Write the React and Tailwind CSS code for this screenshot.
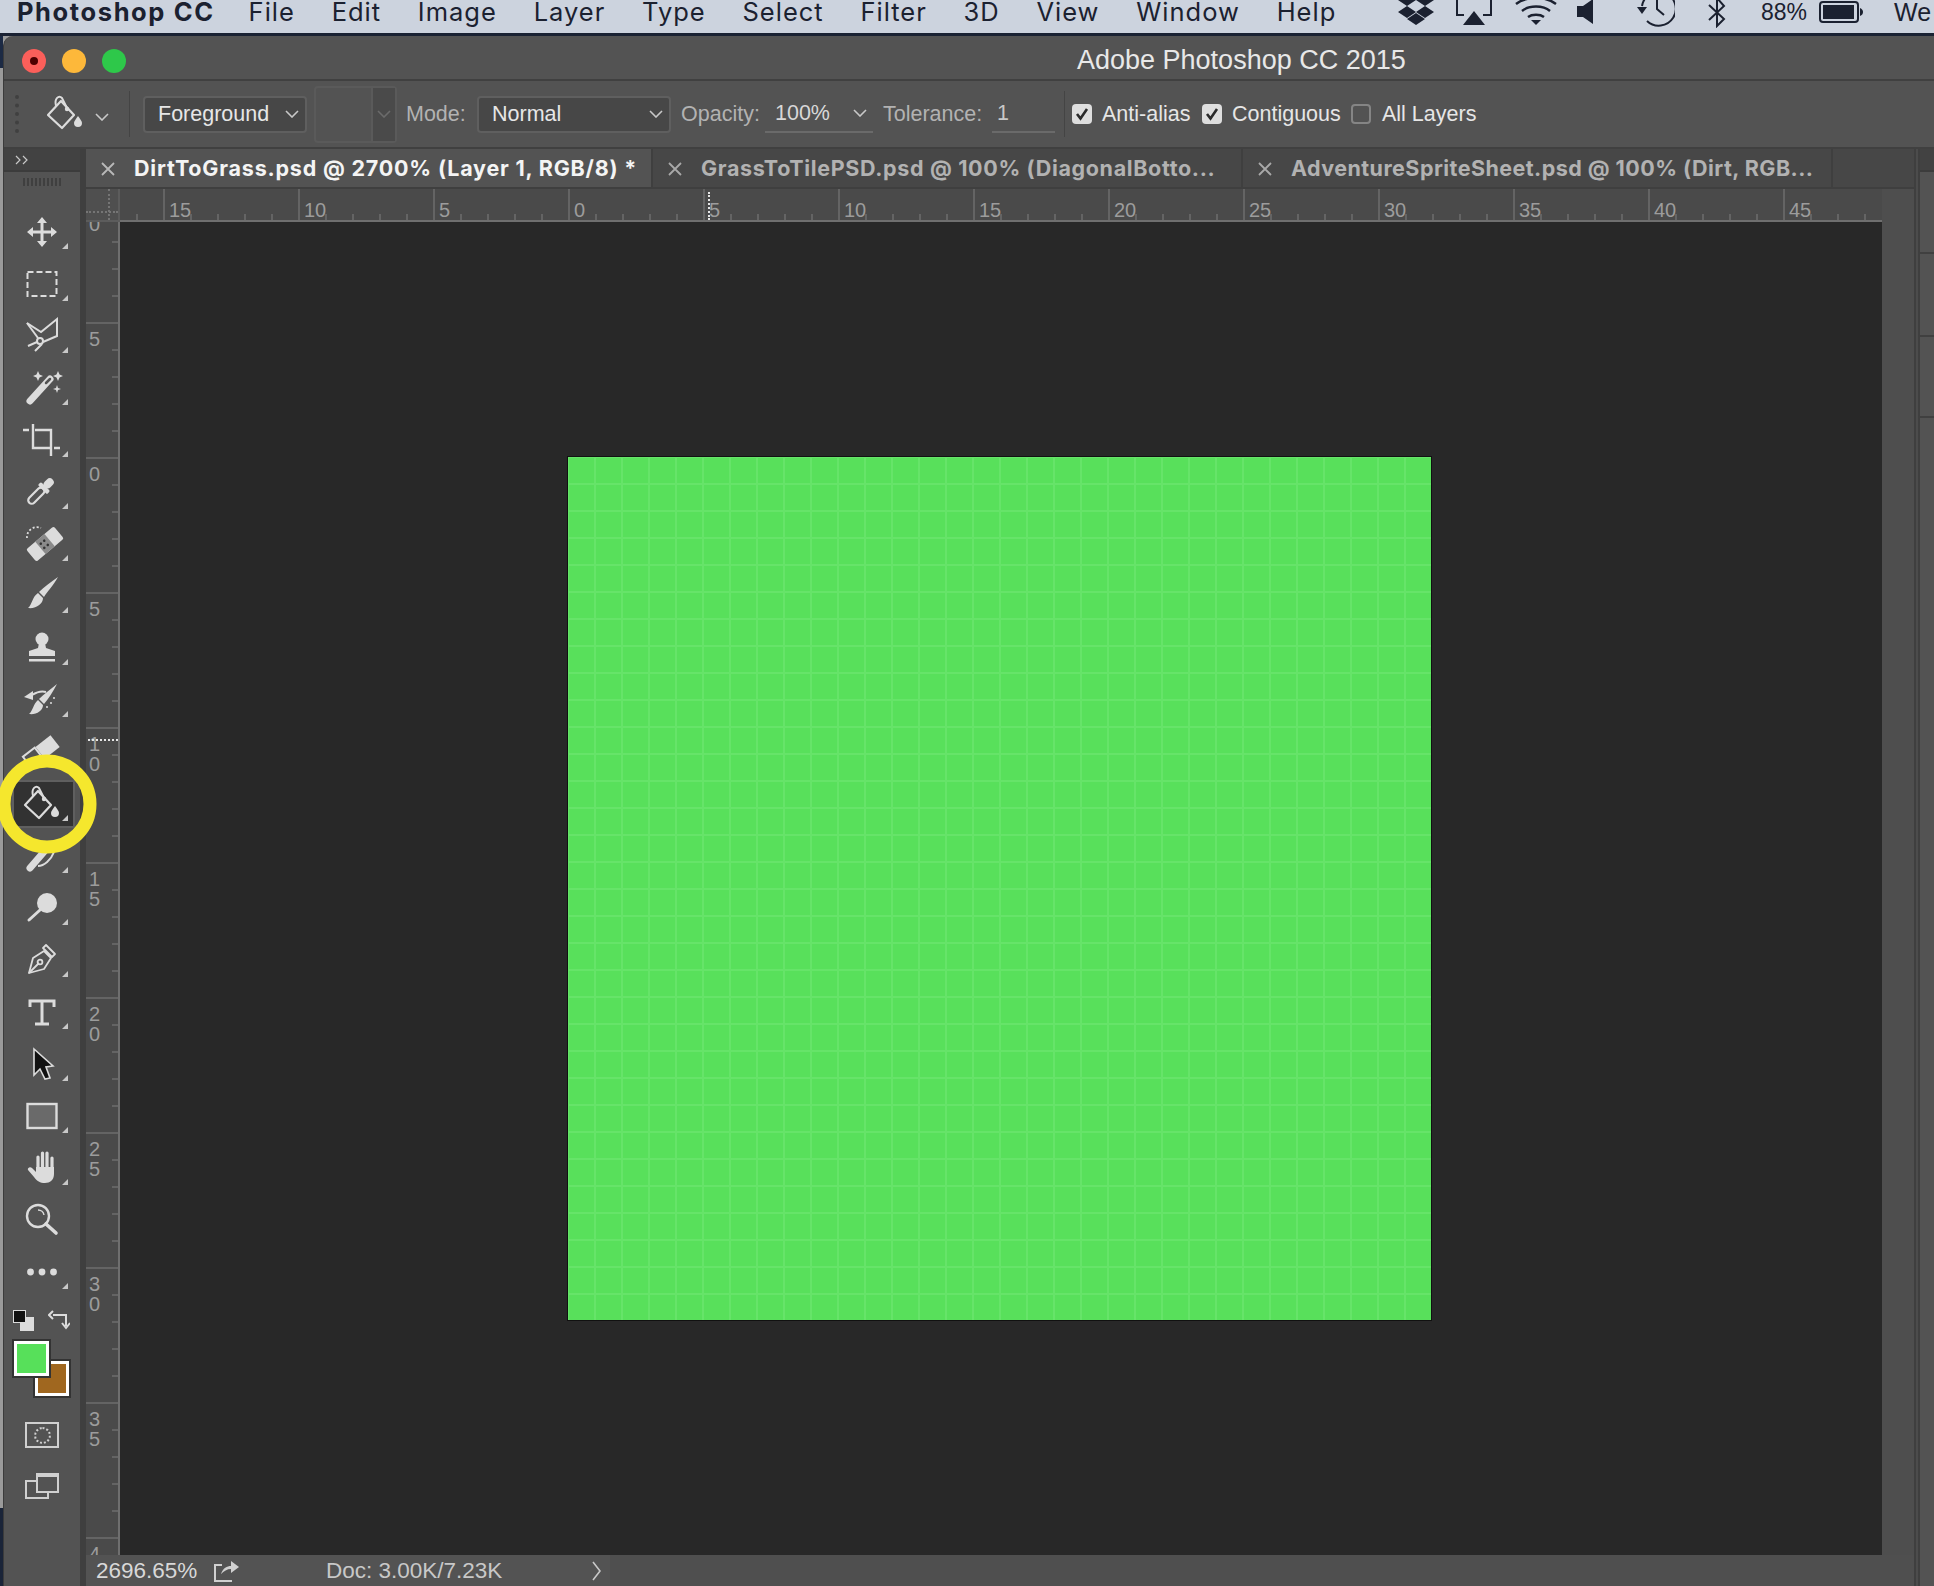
const FG = "#dcdcdc";

const MENUS = ["File", "Edit", "Image", "Layer", "Type", "Select", "Filter", "3D", "View", "Window", "Help"];
const H_LABELS = ["20", "15", "10", "5", "0", "5", "10", "15", "20", "25", "30", "35", "40", "45"];
const V_LABELS = ["10", "5", "0", "5", "10", "15", "20", "25", "30", "35", "40"];

function Chevron({ color = "#c8c8c8", className = "" }) {
  return (
    <svg width="14" height="8" viewBox="0 0 14 8" className={className}>
      <path d="M1 1l6 6 6-6" fill="none" stroke={color} strokeWidth="1.6" />
    </svg>
  );
}

function BucketShape() {
  return (
    <g>
      <path d="M-16 2L-3-12 10 2-2 15Z" fill="none" stroke={FG} strokeWidth="2.2" strokeLinejoin="round" />
      <path d="M-8-7C-10-15-5-18-2-15L3-5" fill="none" stroke={FG} strokeWidth="2" />
      <circle cx="3" cy="-4" r="2.2" fill={FG} />
      <path d="M14 3C16 6 18 8 18 10A4 4 0 0 1 10 10C10 8 12 6 14 3Z" fill={FG} />
    </g>
  );
}

const TOOLS = [
  <path d="M0-15L5-9H1.5V-1.5H9V-5L15 0 9 5V1.5H1.5V9H5L0 15-5 9H-1.5V1.5H-9V5L-15 0-9-5V-1.5H-1.5V-9H-5Z" fill={FG} />,
  <rect x="-14.5" y="-12" width="29" height="24" fill="none" stroke={FG} strokeWidth="2" strokeDasharray="6 3" />,
  <g fill="none" stroke={FG} strokeWidth="2" transform="translate(0 -1)">
    <path d="M-15-12L-1-3 15-16V1L1 7" />
    <path d="M-15-12L-4 3" />
    <circle cx="-2" cy="6" r="3" />
    <path d="M-14 11L-5 7M-7 16L0 9" />
  </g>,
  <g transform="translate(0 -1)">
    <path d="M-12 14L8-8" stroke={FG} strokeWidth="7" strokeLinecap="round" />
    <path d="M4-4L8-8" stroke="#535353" strokeWidth="2.5" strokeLinecap="round" />
    <path d="M-4-16L-2.5-12.5 1-11-2.5-9.5-4-6-5.5-9.5-9-11-5.5-12.5ZM16-16L17.5-12.5 21-11 17.5-9.5 16-6 14.5-9.5 11-11 14.5-12.5ZM15-2L16 1 19 2 16 3 15 6 14 3 11 2 14 1Z" fill={FG} />
  </g>,
  <path d="M-9-16V8H9M-7-10H9V16M-19-10H-13M12 8H18" fill="none" stroke={FG} strokeWidth="2.4" />,
  <g transform="translate(0 -2) rotate(45) translate(0 1)">
    <rect x="-3.5" y="-3" width="7" height="20" rx="3.5" fill="none" stroke={FG} strokeWidth="2.2" />
    <rect x="-6.5" y="-6" width="13" height="4.5" rx="1.5" fill={FG} />
    <rect x="-4" y="-16" width="8" height="11" rx="4" fill={FG} />
  </g>,
  <g transform="translate(0 -3)">
    <g transform="translate(3 3) rotate(-40)">
      <rect x="-18" y="-8" width="36" height="16" rx="2" fill={FG} />
      <rect x="-6" y="-8" width="12" height="16" fill="#8a8a8a" />
      <g fill="#333333">
        <circle cx="-3" cy="-3" r="1.3" />
        <circle cx="1.5" cy="-3" r="1.3" />
        <circle cx="-3" cy="2.5" r="1.3" />
        <circle cx="1.5" cy="2.5" r="1.3" />
      </g>
    </g>
    <path d="M-15-3A10 10 0 0 1-1-13" fill="none" stroke={FG} strokeWidth="1.8" strokeDasharray="2 2" />
  </g>,
  <path transform="translate(0 -2)" d="M16-17C11-8 5-2 2 3L-3-2C2-7 9-12 16-17ZM-4-1L1 4C1 10-6 15-14 14-10 11-10 3-4-1Z" fill={FG} />,
  <g fill={FG}>
    <circle cx="0" cy="-9" r="6.5" />
    <path d="M-3-5H3L4 0 13 3V8H-13V3L-4 0Z" />
    <rect x="-13" y="11" width="26" height="2.5" />
  </g>,
  <g fill={FG} transform="translate(0 -1)">
    <path d="M15-15C11-7 6 0 2 5L-3 0C2-5 9-10 15-15ZM-4 1L1 6C1 12-6 16-13 15-9 12-9 5-4 1Z" />
    <path d="M-18-2L-9-8V1Z" />
    <path d="M-10-4Q-2-9 4-7" fill="none" stroke={FG} strokeWidth="2" />
    <circle cx="12" cy="-1" r="1" />
    <circle cx="9" cy="4" r="1" />
    <circle cx="5" cy="8" r="1" />
  </g>,
  <g transform="rotate(-38)">
    <rect x="-2" y="-8" width="19" height="15" fill={FG} />
    <rect x="-18" y="-8" width="15" height="15" fill="none" stroke={FG} strokeWidth="2" />
  </g>,
  <g transform="translate(-1 -1)">
    <BucketShape />
  </g>,
  <g fill="none" stroke={FG} transform="translate(0 -2)">
    <path d="M-12 14L7-8" strokeWidth="7" strokeLinecap="round" />
    <path d="M-4 12C2 12 9 6 12-2" strokeWidth="2" />
  </g>,
  <g transform="translate(0 -1)">
    <circle cx="5" cy="-4" r="10" fill={FG} />
    <path d="M-13 13L-2 3" stroke={FG} strokeWidth="3" strokeLinecap="round" />
  </g>,
  <g fill="none" stroke={FG} strokeWidth="1.8" transform="translate(0 -1)">
    <path d="M-13 14L-9-1 2-8 9-1 2 10Z" strokeLinejoin="round" />
    <path d="M-13 14L-3 4" />
    <circle cx="-2" cy="3" r="2.4" />
    <path d="M4-14L13-5 10-2 1-11Z" strokeLinejoin="round" />
  </g>,
  <path d="M-12-5V-11H12V-5M0-11V12M-7 12H7" fill="none" stroke={FG} strokeWidth="3" />,
  <path d="M-8-15L11 2 4 3 8 14 3 15-2 5-8 11Z" fill="#111111" stroke={FG} strokeWidth="1.6" />,
  <rect x="-14.5" y="-12" width="29" height="24" fill="#6a6a6a" stroke={FG} strokeWidth="2.4" />,
  <g fill={FG}>
    <path d="M-4 0V-11M0.5 1V-15M5 1V-15M10 2V-10" stroke={FG} strokeWidth="3.2" strokeLinecap="round" />
    <path d="M-6-1H12V6C12 12 8 15 3 15-2 15-5 13-8 9L-14 2C-15 0-12-2-10 0L-6 4Z" />
  </g>,
  <g fill="none" stroke={FG} transform="translate(0 -1)">
    <circle cx="-4" cy="-3" r="11" strokeWidth="2.4" />
    <path d="M4 5L14 14" strokeWidth="3.6" strokeLinecap="round" />
    <path d="M-4-9A6 6 0 0 1 2-4" strokeWidth="1.4" />
  </g>,
  <g fill={FG}>
    <circle cx="-11.5" cy="0" r="3.4" />
    <circle cx="0" cy="0" r="3.4" />
    <circle cx="11.5" cy="0" r="3.4" />
  </g>,
];

function ToolIcon({ icon, noCorner, selected }) {
  return (
    <div className="relative h-[52px] w-full flex items-center justify-center">
      {selected && <div className="absolute left-[8px] right-[5px] top-[2px] bottom-[2px] bg-[#323232] border-2 border-[#5f5f5f]" />}
      <svg width="76" height="52" viewBox="-38 -26 76 52" className="relative">
        {icon}
        {!noCorner && <path d="M20 17L26 11V17Z" fill="#c8c8c8" />}
      </svg>
    </div>
  );
}

function HRuler() {
  return (
    <div className="relative flex-1 h-[33px] overflow-hidden border-b-2 border-[#6f6f6f] bg-[#4a4a4a]">
      <div className="flex ml-[-92px] h-full">
        {H_LABELS.map((label, i) => (
          <div key={i} className="relative w-[135px] h-full shrink-0 border-l-2 border-[#646464] pl-[4px] pt-[10px] text-[20px] leading-[22px] text-[#9c9c9c]">
            {label}
            <div className="absolute left-0 bottom-0 flex">
              {[1, 2, 3, 4].map((n) => (
                <i key={n} className="block w-[27px] h-[6px] border-r-2 border-[#646464]" />
              ))}
            </div>
          </div>
        ))}
      </div>
      <div className="absolute left-[588px] top-[3px] bottom-0 border-l-2 border-dotted border-[#e6e6e6]" />
    </div>
  );
}

function VRuler() {
  return (
    <div className="relative w-[34px] h-full overflow-hidden border-r-2 border-[#6f6f6f] bg-[#4a4a4a]">
      <div className="mt-[-35px] flex flex-col">
        {V_LABELS.map((label, i) => (
          <div key={i} className="relative h-[135px] shrink-0 border-t-2 border-[#646464] pl-[3px] pt-[5px] text-[20px] leading-[20px] text-[#9c9c9c]">
            {label.split("").map((digit, d) => (
              <div key={d}>{digit}</div>
            ))}
            <div className="absolute right-0 top-0 flex flex-col">
              {[1, 2, 3, 4].map((n) => (
                <i key={n} className="block h-[27px] w-[6px] border-b-2 border-[#646464]" />
              ))}
            </div>
          </div>
        ))}
      </div>
      <div className="absolute left-[2px] right-0 top-[517px] border-t-2 border-dotted border-[#e6e6e6]" />
    </div>
  );
}

function Tab({ active, className, children }) {
  return (
    <div className={`flex items-center h-full shrink-0 border-r-2 border-[#3f3f3f] pl-[15px] pt-[1px] font-['Inter',sans-serif] text-[21.5px] font-bold whitespace-nowrap ${className} ${active ? "bg-[#535353] text-[#f4f4f4]" : "bg-[#474747] text-[#b2b2b2]"}`}>
      <svg width="14" height="14" viewBox="0 0 14 14" className="shrink-0 mr-[19px]">
        <path d="M1 1l12 12M13 1L1 13" stroke={active ? "#b8b8b8" : "#a8a8a8"} strokeWidth="1.8" />
      </svg>
      {children}
    </div>
  );
}

function Check({ checked }) {
  if (!checked) return <div className="w-[20px] h-[20px] shrink-0 rounded-[4px] border-2 border-[#858585]" />;
  return (
    <div className="w-[20px] h-[20px] shrink-0 rounded-[4px] bg-[#dedede] flex items-center justify-center">
      <svg width="14" height="14" viewBox="0 0 14 14">
        <path d="M2 7l3.5 4.5L12 2" fill="none" stroke="#2b2b2b" strokeWidth="2.6" />
      </svg>
    </div>
  );
}

function StatusIcons() {
  return (
    <div className="ml-auto flex items-start text-[23px] leading-[24px] tracking-normal text-[#1b2130] font-['Liberation_Sans',Arial,sans-serif]">
      <svg width="36" height="30" viewBox="0 0 36 30" className="mt-[-2px]" fill="#1b2130">
        <path d="M9-4L18 2 9 8 0 2ZM27-4L36 2 27 8 18 2ZM9 8L18 14 9 20 0 14ZM27 8L36 14 27 20 18 14ZM18 15L27 21 18 27 9 21Z" />
      </svg>
      <svg width="38" height="28" viewBox="0 0 38 28" className="ml-[21px]">
        <path d="M2-2V15H9M36-2V15H28" fill="none" stroke="#1b2130" strokeWidth="2" />
        <path d="M19 11L30 25H8Z" fill="#1b2130" />
      </svg>
      <svg width="42" height="28" viewBox="0 0 42 28" className="ml-[22px]" fill="none" stroke="#1b2130" strokeWidth="2.4">
        <path d="M1 4C11-4 31-4 41 4M7 11C14 5 28 5 35 11M13 17C17 14 25 14 29 17" />
        <path d="M21 25L16 20H26Z" fill="#1b2130" stroke="none" />
      </svg>
      <svg width="16" height="24" viewBox="0 0 16 24" className="ml-[20px]" fill="#1b2130">
        <path d="M0 6H6L16-1V24L6 17H0Z" />
      </svg>
      <svg width="38" height="28" viewBox="0 0 38 28" className="ml-[44px]" fill="none" stroke="#1b2130" strokeWidth="2">
        <path d="M5 6A17 17 0 1 1 10 21" />
        <path d="M20-2V9L27 15" />
        <path d="M0 7H10L5 14Z" fill="#1b2130" stroke="none" />
      </svg>
      <svg width="18" height="28" viewBox="0 0 18 28" className="ml-[33px]" fill="none" stroke="#1b2130" strokeWidth="2">
        <path d="M1 5L16 19 9 26V-2L16 6 1 20" />
      </svg>
      <span className="ml-[35px] w-[48px]">88%</span>
      <svg width="44" height="24" viewBox="0 0 44 24" className="ml-[10px]">
        <rect x="1" y="2" width="38" height="20" rx="3" fill="none" stroke="#1b2130" strokeWidth="2" />
        <rect x="4" y="5" width="31" height="14" fill="#1b2130" />
        <path d="M41 8C43 9 44 10 44 12S43 15 41 16Z" fill="#1b2130" />
      </svg>
      <span className="ml-[31px] w-[40px] whitespace-nowrap text-[25px]">We</span>
    </div>
  );
}

export default function App() {
  return (
    <div className="w-[1934px] h-[1586px] overflow-hidden flex flex-col font-['Liberation_Sans',Arial,sans-serif] bg-[#9c9c9c]">
      <div className="h-[36px] shrink-0 bg-[#ccd3de] border-b-[3px] border-[#1a2233] flex items-start pl-[17px] font-['Inter',sans-serif] text-[25.5px] leading-[24px] text-[#1b2130] overflow-hidden">
        <span className="font-bold mr-[34px] tracking-[1.6px]">Photoshop CC</span>
        <div className="flex gap-[36.75px] tracking-[1px]">
          {MENUS.map((menu) => (
            <span key={menu}>{menu}</span>
          ))}
        </div>
        <StatusIcons />
      </div>

      <div className="flex-1 flex min-h-0">
        <div className="w-[3px] shrink-0 flex flex-col">
          <div className="h-[32px] bg-[#1c2a44]" />
          <div className="flex-1 bg-[#9a9a9a]" />
          <div className="h-[78px] bg-[#1a2438]" />
        </div>
        <div className="flex-1 flex flex-col min-w-0 bg-[#535353] rounded-tl-[10px] border-l border-[#3b3b3b] overflow-hidden">
          <div className="h-[45px] shrink-0 border-b-2 border-[#404040] flex items-center pl-[18px] pt-[6px]">
            <div className="relative w-[24px] h-[24px] rounded-full bg-[#fb5f5a] flex items-center justify-center">
              <div className="w-[8px] h-[8px] rounded-full bg-[#4d0000]" />
            </div>
            <div className="w-[24px] h-[24px] rounded-full bg-[#fdb83a] ml-[16px]" />
            <div className="w-[24px] h-[24px] rounded-full bg-[#2ec84a] ml-[16px]" />
            <span className="ml-[951px] text-[27px] text-[#e8e8e8] whitespace-nowrap">Adobe Photoshop CC 2015</span>
          </div>

          <div className="h-[68px] shrink-0 border-b-2 border-[#404040] flex items-center text-[21.5px] text-[#e6e6e6] whitespace-nowrap">
            <div className="ml-[11px] w-[4px] h-[38px] border-l-4 border-dotted border-[#404040]" />
            <svg width="40" height="40" viewBox="-19 -19 40 40" className="ml-[26px]">
              <BucketShape />
            </svg>
            <Chevron className="ml-[10px] mt-[6px]" />
            <div className="ml-[20px] w-[1px] h-[46px] bg-[#444444]" />
            <div className="ml-[13px] w-[164px] h-[37px] flex items-center rounded-[4px] border-2 border-[#5f5f5f] bg-[#474747] pl-[13px]">
              Foreground
              <Chevron className="ml-auto mr-[6px]" />
            </div>
            <div className="ml-[7px] w-[83px] h-[57px] flex rounded-[4px] border-2 border-[#5a5a5a]">
              <div className="w-[57px] border-r-2 border-[#5a5a5a]" />
              <div className="flex-1 flex items-center justify-center bg-[#4a4a4a]">
                <Chevron color="#6b6b6b" />
              </div>
            </div>
            <span className="ml-[9px] w-[71px] text-[#b2b2b2]">Mode:</span>
            <div className="w-[194px] h-[37px] flex items-center rounded-[4px] border-2 border-[#5f5f5f] bg-[#474747] pl-[13px]">
              Normal
              <Chevron className="ml-auto mr-[6px]" />
            </div>
            <span className="ml-[10px] w-[84px] text-[#b2b2b2]">Opacity:</span>
            <div className="w-[108px] h-[37px] flex items-center border-b-2 border-[#6a6a6a] pl-[10px] text-[#d8d8d8]">
              100%
              <Chevron className="ml-auto mr-[6px]" />
            </div>
            <span className="ml-[10px] w-[109px] text-[#b2b2b2]">Tolerance:</span>
            <div className="w-[63px] h-[37px] flex items-center border-b-2 border-[#6a6a6a] pl-[5px] text-[#c8c8c8]">1</div>
            <div className="ml-[9px] w-[1px] h-[46px] bg-[#444444]" />
            <div className="ml-[7px]"><Check checked /></div>
            <span className="ml-[10px] w-[100px]">Anti-alias</span>
            <Check checked />
            <span className="ml-[10px] w-[119px]">Contiguous</span>
            <Check />
            <span className="ml-[11px]">All Layers</span>
          </div>

          <div className="flex-1 flex min-h-0">
            <div className="relative w-[76px] shrink-0 flex flex-col bg-[#535353]">
              <div className="h-[23px] shrink-0 bg-[#424242] border-b-2 border-[#3c3c3c] pl-[11px] flex items-center">
                <svg width="14" height="10" viewBox="0 0 14 10">
                  <path d="M1 1l4 4-4 4M8 1l4 4-4 4" fill="none" stroke="#c8c8c8" strokeWidth="1.2" />
                </svg>
              </div>
              <div className="h-[34px] shrink-0 flex justify-center pt-[6px]">
                <div className="w-[38px] h-[8px] bg-[repeating-linear-gradient(to_right,#3f3f3f_0_2px,transparent_2px_4px)]" />
              </div>
              {TOOLS.map((icon, i) => (
                <ToolIcon key={i} icon={icon} noCorner={i === 19} selected={i === 11} />
              ))}

              <div className="h-[41px] shrink-0 flex items-end pb-[8px] pl-[9px]">
                <div className="relative w-[21px] h-[21px]">
                  <div className="absolute right-0 bottom-0 w-[14px] h-[14px] bg-[#dcdcdc]" />
                  <div className="absolute left-0 top-0 w-[13px] h-[13px] bg-[#111111] border border-[#dcdcdc]" />
                </div>
                <svg width="22" height="22" viewBox="0 0 22 22" className="ml-[14px]" fill="none" stroke="#dcdcdc" strokeWidth="2">
                  <path d="M18 17V6H5M14 14L18 19 22 14M5 2L1 6 5 10" />
                </svg>
              </div>
              <div className="relative h-[83px] shrink-0">
                <div className="absolute left-[31px] top-[22px] w-[34px] h-[35px] bg-[#a0671f] border-[3px] border-white outline outline-2 outline-[#333333]" />
                <div className="absolute left-[10px] top-[2px] w-[35px] h-[35px] bg-[#57e05a] border-[3px] border-white outline outline-2 outline-[#333333]" />
              </div>
              <div className="h-[51px] shrink-0 pl-[21px]">
                <div className="w-[34px] h-[26px] border-2 border-[#d0d0d0] flex items-center justify-center">
                  <div className="w-[17px] h-[17px] rounded-full border-2 border-dotted border-[#d0d0d0]" />
                </div>
              </div>
              <div className="relative w-[36px] h-[26px] ml-[21px] shrink-0">
                <div className="absolute left-0 bottom-0 w-[24px] h-[19px] border-2 border-[#d0d0d0]" />
                <div className="absolute right-[2px] top-0 w-[23px] h-[20px] bg-[#535353] border-2 border-t-4 border-[#d0d0d0]" />
              </div>
            </div>

            <div className="w-[6px] shrink-0 bg-[#3f3f3f]" />

            <div className="w-[1828px] shrink-0 flex flex-col">
              <div className="h-[40px] shrink-0 flex border-b-2 border-[#3f3f3f] bg-[#474747]">
                <Tab active className="w-[567px] tracking-[0.8px]">DirtToGrass.psd @ 2700% (Layer 1, RGB/8) *</Tab>
                <Tab className="w-[590px] tracking-[0.65px]">GrassToTilePSD.psd @ 100% (DiagonalBotto...</Tab>
                <Tab className="w-[590px] tracking-[0.45px]">AdventureSpriteSheet.psd @ 100% (Dirt, RGB...</Tab>
              </div>

              <div className="flex-1 flex min-h-0 bg-[#4e4e4e]">
                <div className="w-[1796px] shrink-0 flex flex-col">
                  <div className="h-[33px] shrink-0 flex">
                    <div className="relative w-[34px] shrink-0 bg-[#4f4f4f] border-r-2 border-b-2 border-[#5c5c5c]">
                      <div className="absolute left-[22px] top-0 bottom-0 border-l-2 border-dotted border-[#757575]" />
                      <div className="absolute left-0 right-0 top-[22px] border-t-2 border-dotted border-[#757575]" />
                    </div>
                    <HRuler />
                  </div>
                  <div className="flex-1 flex min-h-0">
                    <VRuler />
                    <div className="flex-1 bg-[#282828] flex items-center justify-center pr-[3px]">
                      <div className="w-[863px] h-[863px] outline outline-1 outline-[#111111] bg-[#58e05b] bg-[linear-gradient(to_right,#66e469_2px,transparent_2px),linear-gradient(to_bottom,#66e469_2px,transparent_2px)] bg-[size:27px_27px] bg-[position:26px_26px]" />
                    </div>
                  </div>
                </div>
              </div>

              <div className="h-[31px] shrink-0 flex bg-[#4f4f4f] text-[22.5px] text-[#d8d8d8]">
                <div className="w-[524px] shrink-0 bg-[#535353] flex items-center pl-[10px] whitespace-nowrap">
                  <span className="w-[116px]">2696.65%</span>
                  <svg width="28" height="24" viewBox="0 0 28 24" fill="none" stroke="#d0d0d0" strokeWidth="2">
                    <path d="M20 22H3V6H10" />
                    <path d="M9 15C11 9 15 7 19 7V2L27 8 19 14V10C15 10 12 12 9 15Z" fill="#d0d0d0" stroke="none" />
                  </svg>
                  <span className="ml-[86px] w-[266px] text-[#c8c8c8]">Doc: 3.00K/7.23K</span>
                  <svg width="9" height="20" viewBox="0 0 9 20" fill="none" stroke="#c8c8c8" strokeWidth="1.6">
                    <path d="M1 1l7 9-7 9" />
                  </svg>
                </div>
              </div>
            </div>

            <div className="w-[6px] shrink-0 bg-[#3f3f3f] flex justify-center">
              <div className="w-[2px] bg-[#4c4c4c]" />
            </div>

            <div className="flex-1 flex flex-col bg-[#535353]">
              <div className="h-[23px] bg-[#424242] border-b-2 border-[#3c3c3c]" />
              <div className="h-[82px] border-b-2 border-[#404040]" />
              <div className="h-[83px] border-b-2 border-[#404040]" />
              <div className="h-[81px] border-b-2 border-[#404040]" />
            </div>
          </div>
        </div>
      </div>

      <svg width="104" height="104" viewBox="0 0 104 104" className="absolute left-[-5px] top-[752px]">
        <circle cx="52" cy="52" r="43" fill="none" stroke="#f5e72d" strokeWidth="13" />
      </svg>
    </div>
  );
}
